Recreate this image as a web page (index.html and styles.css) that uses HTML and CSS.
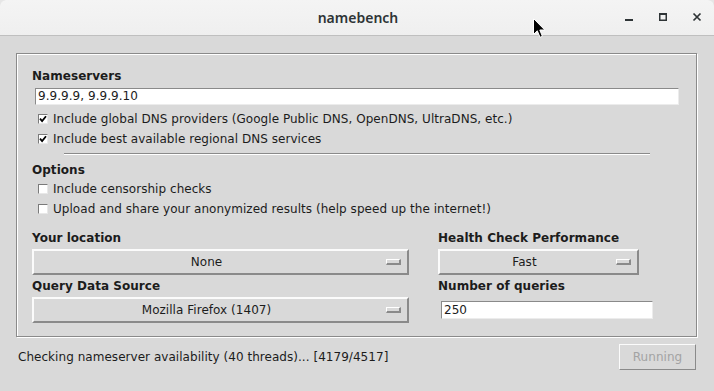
FILE: index.html
```html
<!DOCTYPE html>
<html>
<head>
<meta charset="utf-8">
<title>namebench</title>
<link rel="stylesheet" href="styles.css">
</head>
<body>
<div class="window">
  <header class="titlebar">
    <span class="title">namebench</span>
    <div class="controls">
      <svg class="ctl" width="10" height="10" viewBox="0 0 10 10"><rect x="1" y="7" width="8" height="2" fill="#2e3436"/></svg>
      <svg class="ctl" width="10" height="10" viewBox="0 0 10 10"><rect x="1.75" y="1.75" width="6.5" height="6.5" fill="none" stroke="#2e3436" stroke-width="1.5"/><rect x="1" y="1" width="8" height="2" fill="#2e3436"/></svg>
      <svg class="ctl" width="10" height="10" viewBox="0 0 10 10"><path d="M1.5 1.5 L8.5 8.5 M8.5 1.5 L1.5 8.5" stroke="#2e3436" stroke-width="1.7"/></svg>
    </div>
  </header>

  <main class="body">
    <section class="frame">
      <div class="label">Nameservers</div>
      <div class="entry wide">9.9.9.9, 9.9.9.10</div>
      <div class="check first"><span class="box"><svg width="8" height="8" viewBox="0 0 8 8"><path d="M1 3.6 L3.1 6 L7 1.2" fill="none" stroke="#000" stroke-width="1.8"/></svg></span>Include global DNS providers (Google Public DNS, OpenDNS, UltraDNS, etc.)</div>
      <div class="check"><span class="box"><svg width="8" height="8" viewBox="0 0 8 8"><path d="M1 3.6 L3.1 6 L7 1.2" fill="none" stroke="#000" stroke-width="1.8"/></svg></span>Include best available regional DNS services</div>
      <div class="separator"></div>
      <div class="label options">Options</div>
      <div class="check first-opt"><span class="box"></span>Include censorship checks</div>
      <div class="check"><span class="box"></span>Upload and share your anonymized results (help speed up the internet!)</div>

      <div class="grid">
        <div class="label glabel">Your location</div>
        <div class="label glabel">Health Check Performance</div>
        <div class="menu"><span class="mtext">None</span><span class="ind"></span></div>
        <div class="menu short"><span class="mtext">Fast</span><span class="ind"></span></div>
        <div class="label glabel second">Query Data Source</div>
        <div class="label glabel second">Number of queries</div>
        <div class="menu"><span class="mtext">Mozilla Firefox (1407)</span><span class="ind"></span></div>
        <div class="qcell"><div class="entry small">250</div></div>
      </div>
    </section>

    <footer class="status">
      <span class="stext">Checking nameserver availability (40 threads)... [4179/4517]</span>
      <span class="btn">Running</span>
    </footer>
  </main>

  <svg class="cursor" width="13" height="21" viewBox="0 0 13 21"><path d="M0.5 0.5 L0.5 16.5 L4.3 12.8 L7 19.3 L9.4 18.3 L6.8 12 L11.8 12 Z" fill="#000" stroke="#fff" stroke-width="1"/></svg>
</div>
</body>
</html>
```

FILE: styles.css
```css
html, body {
  margin: 0;
  padding: 0;
}
body {
  width: 714px;
  height: 391px;
  overflow: hidden;
  background: #e6e6e6;
  font-family: "DejaVu Sans", sans-serif;
  font-size: 12px;
  letter-spacing: 0.04px;
  color: #1c1c1c;
}
.window {
  position: relative;
  width: 714px;
  height: 391px;
  background: #d9d9d9;
  border-radius: 6px 6px 0 0;
  overflow: hidden;
}
.titlebar {
  height: 35px;
  border-bottom: 1px solid #bfbfbf;
  background: linear-gradient(#f4f4f4, #efefef);
  display: flex;
  align-items: center;
  justify-content: center;
  position: relative;
}
.title {
  font-family: "Noto Sans", "DejaVu Sans", sans-serif;
  font-size: 14px;
  font-weight: 600;
  letter-spacing: 0;
  color: #2e3436;
  margin-left: 2px;
}
.controls {
  position: absolute;
  right: 12px;
  top: 12px;
  display: flex;
  gap: 24px;
}
.ctl {
  display: block;
}
.body {
  padding-top: 17px;
}
.frame {
  box-sizing: border-box;
  margin-left: 16px;
  width: 681px;
  height: 284px;
  border: 1px solid #8a8a8a;
  box-shadow: inset 1px 1px 0 #fff, 1px 1px 0 #fff;
  padding: 13px 15px 0 15px;
}
.label {
  font-weight: bold;
  line-height: 17px;
  height: 16px;
  padding-top: 1px;
  white-space: nowrap;
}
.entry {
  box-sizing: border-box;
  background: #fff;
  border-top: 1px solid #8a8a8a;
  border-left: 1px solid #8a8a8a;
  border-right: 1px solid #ececec;
  border-bottom: 1px solid #ececec;
  line-height: 15px;
  padding-left: 2px;
  white-space: nowrap;
}
.entry.wide {
  margin-top: 4px;
  margin-left: 3px;
  width: 644px;
  height: 17px;
}
.check {
  height: 20px;
  display: flex;
  align-items: center;
  padding-left: 6px;
  white-space: nowrap;
}
.check.first {
  margin-top: 4px;
}
.check.first-opt {
  margin-top: 1px;
}
.box {
  box-sizing: border-box;
  width: 10px;
  height: 10px;
  background: #fff;
  border-top: 1px solid #7a7a7a;
  border-left: 1px solid #7a7a7a;
  border-right: 1px solid #e8e8e8;
  border-bottom: 1px solid #e8e8e8;
  margin-right: 5px;
  display: flex;
  align-items: center;
  justify-content: center;
  flex: none;
}
.box svg {
  display: block;
}
.separator {
  margin-top: 4px;
  margin-left: 32px;
  width: 586px;
  height: 1px;
  background: #8a8a8a;
  border-bottom: 1px solid #fff;
}
.label.options {
  margin-top: 6px;
}
.grid {
  margin-top: 10px;
  display: grid;
  grid-template-columns: 377px 215px;
  column-gap: 29px;
}
.glabel {
  margin-bottom: 3px;
}
.glabel.second {
  margin-top: 2px;
}
.menu {
  box-sizing: border-box;
  height: 26px;
  border: 2px solid;
  border-color: #fbfbfb #8a8a8a #8a8a8a #fbfbfb;
  background: #d9d9d9;
  display: flex;
  align-items: center;
  position: relative;
  padding-right: 28px;
}
.menu.short {
  width: 201px;
}
.mtext {
  flex: 1;
  text-align: center;
  white-space: nowrap;
}
.ind {
  position: absolute;
  right: 6px;
  top: 8px;
  box-sizing: border-box;
  width: 15px;
  height: 6px;
  border-top: 1px solid #fff;
  border-left: 1px solid #fff;
  border-right: 2px solid #8a8a8a;
  border-bottom: 2px solid #8a8a8a;
}
.qcell {
  display: flex;
  align-items: center;
}
.entry.small {
  margin-left: 3px;
  width: 212px;
  height: 18px;
  line-height: 16px;
}
.status {
  margin-top: 7px;
  padding: 0 18px;
  height: 26px;
  display: flex;
  align-items: center;
  justify-content: space-between;
}
.stext {
  white-space: nowrap;
}
.btn {
  box-sizing: border-box;
  width: 77px;
  height: 26px;
  border: 1px solid;
  border-color: #fbfbfb #8a8a8a #8a8a8a #fbfbfb;
  color: #a3a3a3;
  display: flex;
  align-items: center;
  justify-content: center;
}
.cursor {
  position: absolute;
  left: 533px;
  top: 18px;
}
```
